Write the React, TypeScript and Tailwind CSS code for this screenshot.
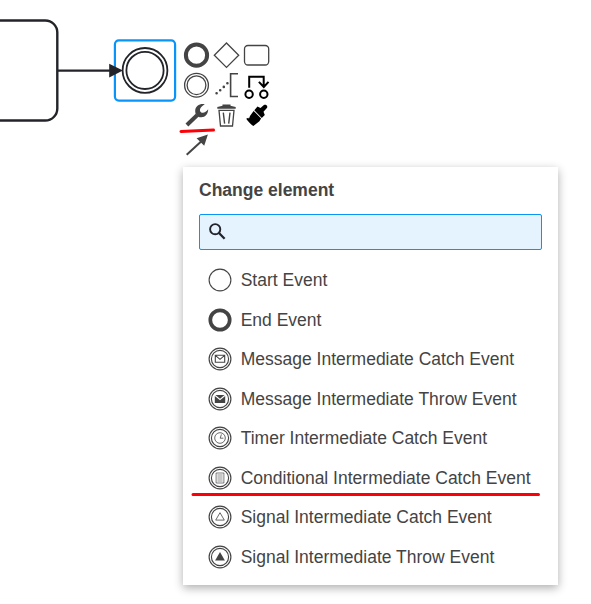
import React from "react";

const INK = "#444444";

type Marker =
  | "start"
  | "end"
  | "message-catch"
  | "message-throw"
  | "timer"
  | "conditional"
  | "signal-catch"
  | "signal-throw";

const entries: { label: string; marker: Marker }[] = [
  { label: "Start Event", marker: "start" },
  { label: "End Event", marker: "end" },
  { label: "Message Intermediate Catch Event", marker: "message-catch" },
  { label: "Message Intermediate Throw Event", marker: "message-throw" },
  { label: "Timer Intermediate Catch Event", marker: "timer" },
  { label: "Conditional Intermediate Catch Event", marker: "conditional" },
  { label: "Signal Intermediate Catch Event", marker: "signal-catch" },
  { label: "Signal Intermediate Throw Event", marker: "signal-throw" },
];

function EventIcon({ marker }: { marker: Marker }) {
  return (
    <svg className="h-6 w-6 shrink-0" viewBox="0 0 24 24" fill="none" stroke={INK}>
      {marker === "start" && <circle cx="12" cy="12" r="10.9" strokeWidth="1.1" />}
      {marker === "end" && <circle cx="12" cy="12" r="9.7" strokeWidth="3.7" />}
      {marker !== "start" && marker !== "end" && (
        <>
          <circle cx="12" cy="12" r="10.9" strokeWidth="1.15" />
          <circle cx="12" cy="12" r="8.6" strokeWidth="1.15" />
        </>
      )}
      {marker === "message-catch" && (
        <path d="M7.3 8.3h9.4v7H7.3zM7.3 8.3l4.7 4 4.7-4" strokeWidth="1.1" />
      )}
      {marker === "message-throw" && (
        <>
          <path d="M6.8 9v6.9h10.4V9L12 13.2z" fill={INK} stroke="none" />
          <path d="M7.4 7.9h9.2L12 11.8z" fill={INK} stroke="none" />
        </>
      )}
      {marker === "timer" && (
        <>
          <circle cx="12" cy="12" r="5.3" strokeWidth="0.8" />
          <path d="M13.4 8.4L12.2 12.2h3.2" strokeWidth="0.8" />
        </>
      )}
      {marker === "conditional" && (
        <>
          <path d="M8.1 7h7.8v10H8.1z" strokeWidth="0.7" />
          <path d="M9.4 9h5.2M9.4 11h5.2M9.4 13h5.2M9.4 15h5.2" strokeWidth="0.6" />
        </>
      )}
      {marker === "signal-catch" && <path d="M12 7.7l4.3 7.4H7.7z" strokeWidth="0.8" />}
      {marker === "signal-throw" && (
        <path d="M12 7l4.9 8.5H7.1z" fill={INK} stroke="none" />
      )}
    </svg>
  );
}

/* Each pad icon keeps the canvas coordinates of its own 30px cell. */
function PadIcon({ x, y, children }: { x: number; y: number; children: React.ReactNode }) {
  return (
    <svg
      className="h-[30px] w-[30px] overflow-visible"
      viewBox={`${x} ${y} 30 30`}
      fill="none"
      stroke={INK}
      strokeWidth="1.3"
    >
      {children}
    </svg>
  );
}

function ContextPad() {
  return (
    <div className="absolute left-[181px] top-[40px] grid grid-cols-3">
      <PadIcon x={181} y={40}>
        <circle cx="196.5" cy="55.2" r="10.6" strokeWidth="4" />
      </PadIcon>
      <PadIcon x={211} y={40}>
        <path d="M226.5 43l12.2 12.2-12.2 12.2-12.2-12.2z" />
      </PadIcon>
      <PadIcon x={241} y={40}>
        <rect x="244.5" y="45.5" width="24.2" height="19.5" rx="3.5" />
      </PadIcon>
      <PadIcon x={181} y={70}>
        <circle cx="196.5" cy="85.2" r="11.9" />
        <circle cx="196.5" cy="85.2" r="9.4" />
      </PadIcon>
      <PadIcon x={211} y={70}>
        <path d="M238 73.7h-7.4v22.8h7.4" strokeWidth="1.6" />
        <path
          d="M216.6 93.3h.01M220.2 90.2h.01M223.8 86.9h.01M227.4 83.3h.01"
          strokeWidth="2.6"
          strokeLinecap="round"
        />
      </PadIcon>
      <PadIcon x={241} y={70}>
        <g stroke="#000" strokeWidth="2">
          <circle cx="249.1" cy="94.2" r="3.7" />
          <circle cx="263.8" cy="94.2" r="3.7" />
          <path d="M249.2 87.8V76.7h14.5v10.2M258.9 81.9l4.9 5.1 4.7-5.1" />
        </g>
      </PadIcon>
      <PadIcon x={181} y={100}>
        <path d="M186.9 125l10.2-9.8" strokeWidth="4" />
        <path
          d="M204.8 104.2c-5-1-9.3 1.8-9.6 6.2-.2 4.4 2.4 6.9 6.2 6.9 3.8-.1 6.7-3 6.8-8-2.4 3.3-5.6 4.4-7.5 2.6-1.8-1.9-.2-5.3 4.1-7.7z"
          fill={INK}
          stroke="none"
        />
      </PadIcon>
      <PadIcon x={211} y={100}>
        <path d="M217.3 108.7v-1.6l5.2-1.3v-1.3h8v1.3l5.2 1.3v1.6z" fill={INK} stroke="none" />
        <path d="M219 110.4h15l-1.5 15.6h-12z" />
        <path d="M223.3 112.6l1.3 11M230 112.6l-1.3 11" strokeWidth="1.4" />
      </PadIcon>
      <PadIcon x={241} y={100}>
        <g fill="#000" stroke="none">
          <path d="M254.3 110.2l3.2-3.6 3 1.4 3.4-3c2.1-1.2 4.4 1.1 3 3.1l-3.4 3.7 1.3 3.1-3 3.1z" />
          <path d="M253.6 110.9l7.5 7.7-1.7 2.6-6.1 4.8c-2.2-1.6-4.9-4.3-7.1-7.3l2.1-.9.6.9 1.1-2.7z" />
        </g>
      </PadIcon>
    </div>
  );
}

function Diagram() {
  return (
    <svg className="absolute left-0 top-0 h-[170px] w-[300px]" viewBox="0 0 300 170" fill="none">
      <rect x="-40" y="20.5" width="97.3" height="100" rx="12" stroke="#22242a" strokeWidth="2.4" />
      <path d="M58 70.6h54" stroke="#22242a" strokeWidth="2.3" />
      <rect x="114.9" y="40.4" width="60.2" height="60.2" rx="4" stroke="#0895fb" strokeWidth="2.2" />
      <path d="M109.2 63.7v13.7l13.7-6.8z" fill="#22242a" />
      <circle cx="145" cy="70.4" r="22.4" stroke="#22242a" strokeWidth="1.8" />
      <circle cx="145" cy="70.4" r="18.6" stroke="#22242a" strokeWidth="1.8" />
      <path d="M186.7 154.8l15.5-14.4" stroke={INK} strokeWidth="2" />
      <path d="M207.9 134.4l-3.7 11.3-7.6-7.5z" fill={INK} />
    </svg>
  );
}

function ChangeMenu() {
  return (
    <section className="absolute left-[183px] top-[167px] flex h-[418px] w-[375px] flex-col bg-white px-4 pt-[11px] shadow-[0_3px_9px_rgba(0,0,0,0.32)]">
      <h2 className="text-[17.5px] leading-6 font-bold text-[#444444]">Change element</h2>
      <div className="mt-3 flex h-9 w-[343px] shrink-0 items-center rounded-[2px] border border-[#0895f5] bg-[#e5f3ff] pl-[9px]">
        <svg className="h-[18px] w-[18px]" viewBox="0 0 18 18" fill="none" stroke="#22242a">
          <circle cx="6.2" cy="6.2" r="5.1" strokeWidth="1.9" />
          <path d="M10 10l5.6 5.7" strokeWidth="2.3" />
        </svg>
      </div>
      <ul className="mt-[10.35px] flex flex-col pl-[8.7px]">
        {entries.map((entry) => (
          <li key={entry.marker} className="flex h-[39.5px] items-center gap-[9px]">
            <EventIcon marker={entry.marker} />
            <span className="text-[17.5px] leading-6 whitespace-nowrap text-[#444444]">{entry.label}</span>
          </li>
        ))}
      </ul>
    </section>
  );
}

export default function App() {
  return (
    <main className="relative h-[604px] w-[591px] overflow-hidden bg-white font-['Liberation_Sans',Arial,sans-serif]">
      <Diagram />
      <ContextPad />
      <ChangeMenu />
      <svg
        className="pointer-events-none absolute left-0 top-0 h-[604px] w-[591px]"
        viewBox="0 0 591 604"
        fill="none"
        stroke="#fb0007"
        strokeWidth="3"
        strokeLinecap="round"
      >
        <path d="M181 131.4l32.5-1.3M193 494.5h345.5" />
      </svg>
    </main>
  );
}
